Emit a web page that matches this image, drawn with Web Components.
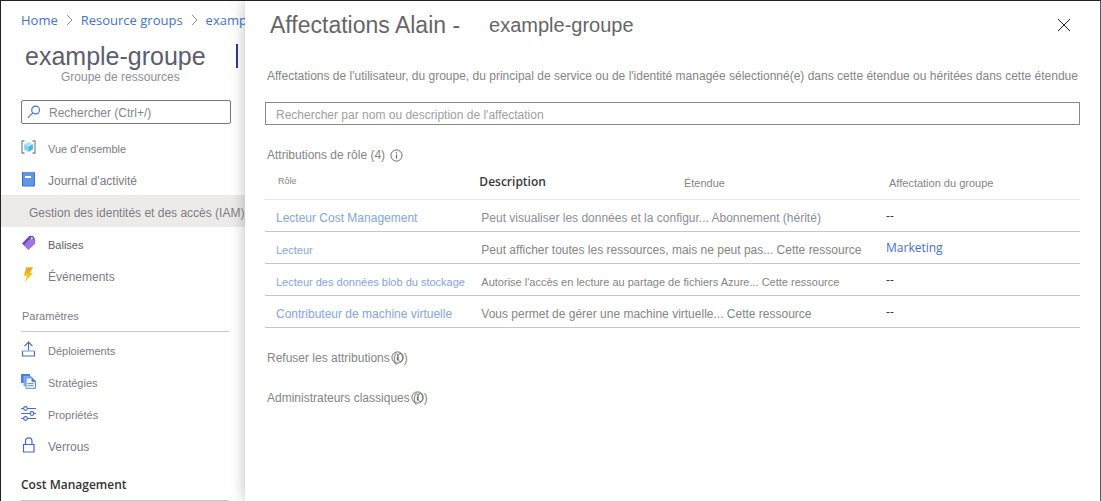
<!DOCTYPE html>
<html lang="fr">
<head>
<meta charset="utf-8">
<meta name="viewport" content="width=device-width, initial-scale=1">
<title>Affectations Alain - example-groupe</title>
<style>
  body { margin: 0; background: #fff; font-family: "Liberation Sans", Arial, sans-serif; font-size: 12px; line-height: 16px; color: #7d7b85; }
</style>
</head>
<body>
<access-page></access-page>

<template id="t-page">
  <style>
    :host { display: grid; grid-template-columns: 244px minmax(0, 1fr); box-sizing: border-box; min-height: 100vh; border: solid #222; border-width: 1px 1px 0 1px; border-right-color: #5c5c60; overflow: hidden; }
  </style>
  <group-sidebar></group-sidebar>
  <assignments-panel></assignments-panel>
</template>

<template id="t-sidebar">
  <style>
    :host { display: block; min-width: 0; }
    .crumbs { display: flex; align-items: center; gap: 7px; margin: 9px 0 0 20px; height: 20px; overflow: hidden; white-space: nowrap; font-family: "Open Sans", sans-serif; font-size: 13px; }
    .crumbs a { color: #4272d7; text-decoration: none; }
    .crumbs svg { flex: none; }
    .head { display: flex; justify-content: space-between; align-items: center; padding: 12px 7px 0 24px; }
    h1 { margin: 0; font-size: 25px; line-height: 28px; font-weight: 400; color: #5b5d70; }
    .caret { width: 2px; height: 24px; background: #2b3a94; }
    .kind { margin: 0 0 0 60px; line-height: 14px; color: #8f8f97; }
    .search { display: flex; align-items: center; gap: 8px; margin: 16px 14px 7px 20px; height: 22px; padding: 0 5px; border: 1px solid #77777c; border-radius: 2px; }
    .search input { flex: 1; min-width: 0; border: 0; padding: 2px 0 0; outline: 0; background: none; font: inherit; color: #7d7b85; }
    .search input::placeholder { color: #85858d; opacity: 1; }
    h2 { margin: 0 16px 0 20px; font-size: 11px; font-weight: 400; line-height: 16px; padding: 17px 0 7px 1px; border-bottom: 1px solid #c8c8c8; }
    h2.strong { font: 600 12px/16px "Open Sans", sans-serif; color: #333; padding: 16px 0 7px 0; }
    nav { display: block; }
    nav + h2 + nav { padding-top: 1px; }
  </style>
  <nav class="crumbs" aria-label="Fil d'Ariane">
    <a href="#home">Home</a>
    <svg width="9" height="12" viewBox="0 0 9 12" fill="none" stroke="#8a8a8a"><path d="M2 1l5 5-5 5"/></svg>
    <a href="#groups">Resource groups</a>
    <svg width="9" height="12" viewBox="0 0 9 12" fill="none" stroke="#8a8a8a"><path d="M2 1l5 5-5 5"/></svg>
    <a href="#group">examp</a>
  </nav>
  <div class="head"><h1>example-groupe</h1><span class="caret"></span></div>
  <p class="kind">Groupe de ressources</p>
  <div class="search">
    <svg width="14" height="14" viewBox="0 0 14 14" fill="none" stroke="#4a78d8" stroke-width="1.2"><circle cx="8.6" cy="5" r="3.9"/><path d="M5.8 7.8L.8 12.8"/></svg>
    <input type="search" aria-label="Rechercher" placeholder="Rechercher (Ctrl+/)">
  </div>
  <nav aria-label="Groupe de ressources">
    <menu-item icon="group" small>Vue d'ensemble</menu-item>
    <menu-item icon="journal">Journal d'activité</menu-item>
    <menu-item selected>Gestion des identités et des accès (IAM)</menu-item>
    <menu-item icon="tag" small dark>Balises</menu-item>
    <menu-item icon="bolt">Événements</menu-item>
  </nav>
  <h2>Paramètres</h2>
  <nav aria-label="Paramètres">
    <menu-item icon="deploy" small>Déploiements</menu-item>
    <menu-item icon="policy" small>Stratégies</menu-item>
    <menu-item icon="sliders" small>Propriétés</menu-item>
    <menu-item icon="lock">Verrous</menu-item>
  </nav>
  <h2 class="strong">Cost Management</h2>
</template>

<template id="t-item">
  <style>
    :host { display: block; }
    a { display: flex; align-items: center; gap: 12px; height: 32px; padding-left: 20px; color: inherit; text-decoration: none; white-space: nowrap; }
    .icon { flex: none; width: 15px; height: 16px; }
    .icon svg { display: block; }
    .label { padding-top: 3px; }
    :host([small]) .label { font-size: 11px; }
    :host([dark]) { color: #615b6b; }
    :host([selected]) a { background: #edebe9; padding-left: 28px; }
    :host([selected]) .icon { display: none; }
    :host([selected]) .label { position: relative; z-index: 2; }
  </style>
  <a href="#"><span class="icon"></span><span class="label"><slot></slot></span></a>
</template>

<template id="t-info">
  <style>
    :host { display: inline-block; width: 13px; height: 13px; }
    button { display: block; border: 0; padding: 0; background: none; width: 13px; height: 13px; }
    svg { display: block; }
  </style>
  <button type="button" aria-label="Informations"><svg width="13" height="13" viewBox="0 0 13 13" fill="none" stroke="#6c6c6c"><circle cx="6.5" cy="6.5" r="5.6"/><path d="M6.5 5.5v4M6.5 3.2v1.3" stroke-width="1.3"/></svg></button>
</template>

<template id="t-panel">
  <style>
    :host { display: block; position: relative; z-index: 1; min-width: 0; background: #fff; box-shadow: 0 0 14px rgba(0,0,0,.26); color: #858585; }
    header { display: flex; align-items: center; padding: 10px 29px 0 25px; height: 28px; }
    h1 { flex: 1; margin: 0; display: flex; align-items: center; gap: 29px; font-size: 23px; line-height: 28px; font-weight: 400; color: #666; white-space: nowrap; }
    h1 small { font-size: 20px; }
    .close { border: 0; padding: 0; background: none; width: 14px; height: 14px; }
    .close svg { display: block; }
    .intro { margin: 29px 0 18px 22px; line-height: 16px; white-space: nowrap; }
    input { display: block; box-sizing: border-box; width: calc(100% - 40px); height: 23px; margin: 0 20px; padding: 2px 10px 0; border: 1px solid #8a8a8a; border-radius: 0; outline: 0; font: inherit; color: #666; }
    input::placeholder { color: #a0a0a0; opacity: 1; }
    h2 { display: flex; align-items: center; gap: 5px; margin: 22px 0 0 22px; font-size: 12px; line-height: 16px; font-weight: 400; white-space: nowrap; }
    h2 + h2 { margin-top: 24px; }
    .count { position: relative; }
    .count info-tip { position: absolute; left: -2px; top: 0; }
  </style>
  <header>
    <h1><span>Affectations Alain -</span><small>example-groupe</small></h1>
    <button class="close" type="button" aria-label="Fermer"><svg width="14" height="14" viewBox="0 0 14 14" fill="none" stroke="#222"><path d="M1 1l12 12M13 1L1 13"/></svg></button>
  </header>
  <p class="intro">Affectations de l'utilisateur, du groupe, du principal de service ou de l'identité managée sélectionné(e) dans cette étendue ou héritées dans cette étendue</p>
  <input type="text" aria-label="Rechercher une affectation" placeholder="Rechercher par nom ou description de l'affectation">
  <h2><span>Attributions de rôle (4)</span><info-tip></info-tip></h2>
  <role-table></role-table>
  <h2><span>Refuser les attributions <span class="count">(0)<info-tip></info-tip></span></span></h2>
  <h2><span>Administrateurs classiques <span class="count">(0)<info-tip></info-tip></span></span></h2>
</template>

<template id="t-table">
  <style>
    :host { display: block; margin: 0 20px; }
    table { width: 100%; border-collapse: separate; border-spacing: 0; table-layout: fixed; }
    col.role { width: 26.3%; } col.desc { width: 25.1%; } col.scope { width: 24.8%; }
    th { box-sizing: border-box; height: 37px; padding: 4px 0 0; border-bottom: 1px solid #e6e6e6; text-align: left; font-weight: 400; font-size: 11px; white-space: nowrap; }
    th.role { padding: 0 0 0 13px; font-size: 9px; }
    th.desc { padding: 2px 0 0; font: 600 12px/16px "Open Sans", sans-serif; color: #3a3a3a; }
    th.group { padding-left: 3px; }
    td { height: 32px; padding: 4px 0 0 2px; border-bottom: 1px solid #c8c8c8; box-sizing: border-box; white-space: nowrap; }
    td.role { padding-left: 11px; }
    td.group { padding: 0; font: 12px/16px "Open Sans", sans-serif; color: #333; }
    tr.blue { color: #8b8d9c; }
    td.small { font-size: 11px; }
    a { color: #84a5e0; text-decoration: none; }
    td.group a { color: #4272d7; }
  </style>
  <table>
    <colgroup><col class="role"><col class="desc"><col class="scope"><col></colgroup>
    <thead><tr><th class="role">Rôle</th><th class="desc">Description</th><th class="scope">Étendue</th><th class="group">Affectation du groupe</th></tr></thead>
    <tbody>
      <tr class="blue"><td class="role"><a href="#r1">Lecteur Cost Management</a></td><td colspan="2">Peut visualiser les données et la configur... Abonnement (hérité)</td><td class="group">--</td></tr>
      <tr><td class="role small"><a href="#r2">Lecteur</a></td><td colspan="2">Peut afficher toutes les ressources, mais ne peut pas... Cette ressource</td><td class="group"><a href="#marketing">Marketing</a></td></tr>
      <tr><td class="role small"><a href="#r3">Lecteur des données blob du stockage</a></td><td class="small" colspan="2">Autorise l'accès en lecture au partage de fichiers Azure... Cette ressource</td><td class="group">--</td></tr>
      <tr><td class="role"><a href="#r4">Contributeur de machine virtuelle</a></td><td colspan="2">Vous permet de gérer une machine virtuelle... Cette ressource</td><td class="group">--</td></tr>
    </tbody>
  </table>
</template>

<script>
  const ICONS = {
    group: '<svg width="15" height="16" viewBox="0 0 15 16"><path d="M3.5 2H1v12h2.500M11.500 2H14v12h-2.500" fill="none" stroke="#8c8c8c" stroke-width="1.300"/><path d="M7.500 3.200l4.300 2.400v4.800l-4.300 2.400-4.300-2.400V5.600z" fill="#7fd3f3"/><path d="M7.500 3.200l4.300 2.400-4.300 2.400-4.300-2.400z" fill="#a9e6fb"/><path d="M7.500 8l4.300-2.400v4.800l-4.300 2.400z" fill="#4fb3e8"/></svg>',
    journal: '<svg width="15" height="16" viewBox="0 0 15 16"><rect x="1" y="1" width="13" height="14.500" rx="1" fill="#3f74c9"/><rect x="1" y="1" width="12" height="13.500" rx="1" fill="#5f97e6"/><rect x="1" y="1" width="1" height="14" fill="#3a6cc4"/><rect x="4" y="5" width="6" height="2" fill="#fff"/></svg>',
    tag: '<svg width="15" height="16" viewBox="0 0 15 16"><path d="M8.500 .8l4 .4 1.600 4-.2 3.600-6.600 6L1 8.600z" fill="#6b43c4"/><path d="M9 3.500l5.100 1.500-.2 3.800-6.600 6-4.300-4.600z" fill="#9c78dc"/><circle cx="10.800" cy="3.300" r="1" fill="#fff"/></svg>',
    bolt: '<svg width="15" height="16" viewBox="0 0 15 16"><path d="M5.500 .5h6.500L8.500 6H12L3.500 15.500 6.200 8.800H2.500z" fill="#f8c21f"/><path d="M5.500 .5h6.500L8.500 6 4 6z" fill="#f0a62b"/></svg>',
    deploy: '<svg width="15" height="16" viewBox="0 0 15 16" fill="none" stroke="#4668d4" stroke-width="1.200"><path d="M7.500 9.500V1.200M3.500 5.200l4-4 4 4"/><path d="M1.500 10v5h12v-5" /><path d="M1.500 10h12" stroke="#8aa2ea"/></svg>',
    policy: '<svg width="15" height="16" viewBox="0 0 15 16"><path d="M0 1h9v9H0z" fill="#4a7fdc"/><path d="M2.500 3h8v10h-8z" fill="#84aaf0"/><path d="M5 4.800h6l3.500 3.500v7H5z" fill="#eef4ff" stroke="#5d88de"/><path d="M11 4.800v3.500h3.500" fill="#4a7fdc" stroke="#4a7fdc"/><path d="M6.500 10.500h6M6.500 12.500h6" stroke="#6c95e5"/></svg>',
    sliders: '<svg width="15" height="16" viewBox="0 0 15 16" fill="#fff" stroke="#4668d4" stroke-width="1.100"><path d="M0 3.500h15M0 8.500h15M0 13.500h15"/><circle cx="4.500" cy="3.500" r="1.900"/><circle cx="11" cy="8.500" r="1.900"/><circle cx="4.500" cy="13.500" r="1.900"/></svg>',
    lock: '<svg width="15" height="16" viewBox="0 0 15 16" fill="none" stroke="#4668d4" stroke-width="1.200"><path d="M2.500 7.500h10.500v7.500H2.500z"/><path d="M4.500 7.500V4.200a3.200 3.200 0 0 1 6.500 0v3.300"/></svg>'
  };

  class TemplateElement extends HTMLElement {
    constructor() {
      super();
      const template = document.getElementById(this.constructor.template);
      this.attachShadow({ mode: 'open' }).append(template.content.cloneNode(true));
    }
  }

  customElements.define('info-tip', class extends TemplateElement { static template = 't-info'; });
  customElements.define('menu-item', class extends TemplateElement {
    static template = 't-item';
    connectedCallback() {
      this.shadowRoot.querySelector('.icon').innerHTML = ICONS[this.getAttribute('icon')] || '';
      if (this.hasAttribute('selected')) this.shadowRoot.querySelector('a').setAttribute('aria-current', 'page');
    }
  });
  customElements.define('role-table', class extends TemplateElement { static template = 't-table'; });
  customElements.define('group-sidebar', class extends TemplateElement { static template = 't-sidebar'; });
  customElements.define('assignments-panel', class extends TemplateElement { static template = 't-panel'; });
  customElements.define('access-page', class extends TemplateElement { static template = 't-page'; });
</script>
</body>
</html>
